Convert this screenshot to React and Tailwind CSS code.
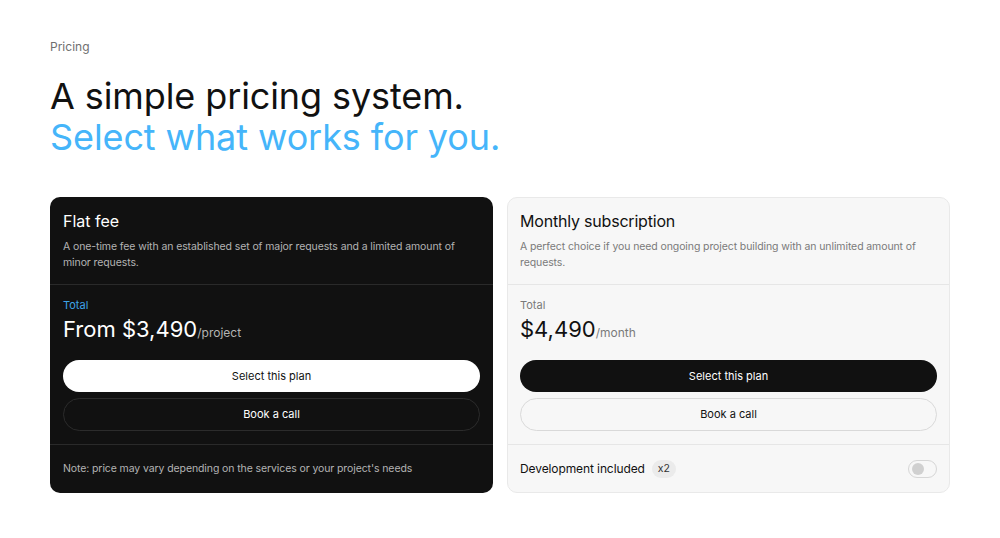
import React from 'react';

function Toggle() {
  return (
    <div className="w-[29px] h-[18px] rounded-full border border-[#d6d6d6] bg-[#f7f7f7] flex items-center px-[3px]">
      <div className="w-[12px] h-[12px] rounded-full bg-[#d0d0d0]" />
    </div>
  );
}

export default function App() {
  return (
    <div className="w-[1000px] h-[538px] bg-white px-[50px] pt-[39px] font-['Inter',sans-serif]">
      <p className="text-[12px] leading-[16px] text-[#6f6f6f]">Pricing</p>
      <h1 className="mt-[21px] text-[36px] leading-[41px] tracking-[-0.1px] text-[#111]">
        A simple pricing system.
        <br />
        <span className="text-[#45b5fa]">Select what works for you.</span>
      </h1>

      <div className="mt-[39px] grid grid-cols-2 gap-[14px]">
        {/* flat fee */}
        <div className="bg-[#111111] rounded-[10px] text-white overflow-hidden">
          <div className="px-[13px] pt-[14px] pb-[13px]">
            <h2 className="text-[16px] leading-[20px]">Flat fee</h2>
            <p className="mt-[8px] text-[10.5px] leading-[16px] tracking-[-0.1px] text-[#b4b4b4]">
              A one-time fee with an established set of major requests and a limited amount of minor requests.
            </p>
          </div>
          <div className="border-t border-[#2a2a2a] px-[13px] pt-[12px] pb-[13px]">
            <p className="text-[11px] leading-[16px] text-[#3da3e8]">Total</p>
            <p className="mt-[2px] text-[22px] leading-[28px]">
              From $3,490<span className="text-[12px] text-[#b4b4b4]">/project</span>
            </p>
            <button className="mt-[13px] w-full h-[32px] rounded-full bg-white text-[#111] text-[11px]">
              Select this plan
            </button>
            <button className="mt-[6px] w-full h-[33px] rounded-full border border-[#2c2c2c] text-white text-[11px]">
              Book a call
            </button>
          </div>
          <div className="border-t border-[#2a2a2a] px-[13px] h-[49px] flex items-center">
            <p className="text-[10.5px] tracking-[-0.1px] text-[#b4b4b4]">Note: price may vary depending on the services or your project's needs</p>
          </div>
        </div>

        {/* monthly */}
        <div className="bg-[#f7f7f7] border border-[#e9e9e9] rounded-[10px] text-[#111] overflow-hidden">
          <div className="px-[12px] pt-[13px] pb-[13px]">
            <h2 className="text-[16px] leading-[20px] tracking-[-0.2px]">Monthly subscription</h2>
            <p className="mt-[8px] text-[10.5px] leading-[16px] tracking-[-0.1px] text-[#7a7a7a]">
              A perfect choice if you need ongoing project building with an unlimited amount of requests.
            </p>
          </div>
          <div className="border-t border-[#e6e6e6] px-[12px] pt-[12px] pb-[13px]">
            <p className="text-[11px] leading-[16px] text-[#7a7a7a]">Total</p>
            <p className="mt-[2px] text-[22px] leading-[28px]">
              $4,490<span className="text-[12px] text-[#7a7a7a]">/month</span>
            </p>
            <button className="mt-[13px] w-full h-[32px] rounded-full bg-[#111111] text-white text-[11px]">
              Select this plan
            </button>
            <button className="mt-[6px] w-full h-[33px] rounded-full border border-[#d9d9d9] text-[#111] text-[11px]">
              Book a call
            </button>
          </div>
          <div className="border-t border-[#e6e6e6] px-[12px] h-[48px] flex items-center justify-between">
            <div className="flex items-center gap-[7px]">
              <span className="text-[12px] tracking-[-0.1px]">Development included</span>
              <span className="bg-[#ebebeb] rounded-full px-[6px] h-[18px] flex items-center text-[10.5px] text-[#333]">x2</span>
            </div>
            <Toggle />
          </div>
        </div>
      </div>
    </div>
  );
}
